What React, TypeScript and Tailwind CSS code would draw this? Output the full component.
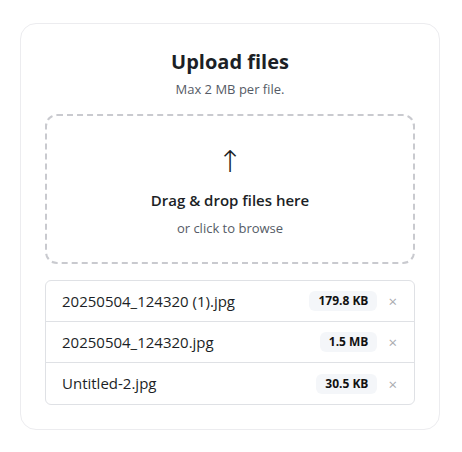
import { useState } from 'react';

interface UploadedFile {
  name: string;
  size: string;
}

const initialFiles: UploadedFile[] = [
  { name: '20250504_124320 (1).jpg', size: '179.8 KB' },
  { name: '20250504_124320.jpg', size: '1.5 MB' },
  { name: 'Untitled-2.jpg', size: '30.5 KB' },
];

export default function App() {
  const [files, setFiles] = useState<UploadedFile[]>(initialFiles);

  const removeFile = (name: string) => {
    setFiles(files.filter(f => f.name !== name));
  };

  return (
    <div className="min-h-screen bg-white pt-[23px] px-5" style={{ fontFamily: '"Open Sans", "Noto Sans", sans-serif' }}>
      <div className="w-[420px] rounded-2xl border border-[#ececef] bg-white px-6 pt-6 pb-6">
        <div className="text-center">
          <h1 className="text-[20px] leading-7 font-bold text-[#1c1f26]">Upload files</h1>
          <p className="mt-1 text-[13px] leading-[18px] text-[#555b66]">Max 2 MB per file.</p>
        </div>

        {/* Drop zone */}
        <div className="mt-4 h-[150px] pt-[4px] rounded-xl border-2 border-dashed border-[#c9cacf] flex flex-col items-center justify-center cursor-pointer">
          <span className="text-[30px] leading-8 font-light text-[#1c1f26]" style={{ fontFamily: '"DejaVu Sans", sans-serif' }}>↑</span>
          <span className="mt-[12px] text-[15px] leading-5 font-semibold text-[#1c1f26]">Drag &amp; drop files here</span>
          <span className="mt-[9px] text-[13px] leading-[18px] text-[#555b66]">or click to browse</span>
        </div>

        {/* File list */}
        <ul className="mt-4 rounded-md border border-[#dfe1e5] divide-y divide-[#dfe1e5]">
          {files.map(file => (
            <li key={file.name} className="flex items-center h-[41px] pl-4 pr-[17px]">
              <span className="flex-1 truncate text-[15px] text-[#1c1f26]">{file.name}</span>
              <span className="rounded-md bg-[#f4f6f9] px-[9px] py-[2px] text-[12px] leading-4 font-bold text-[#111]">
                {file.size}
              </span>
              <button
                onClick={() => removeFile(file.name)}
                className="ml-[11px] text-[15px] leading-4 text-[#a9abb0]"
              >
                ×
              </button>
            </li>
          ))}
        </ul>
      </div>
    </div>
  );
}
